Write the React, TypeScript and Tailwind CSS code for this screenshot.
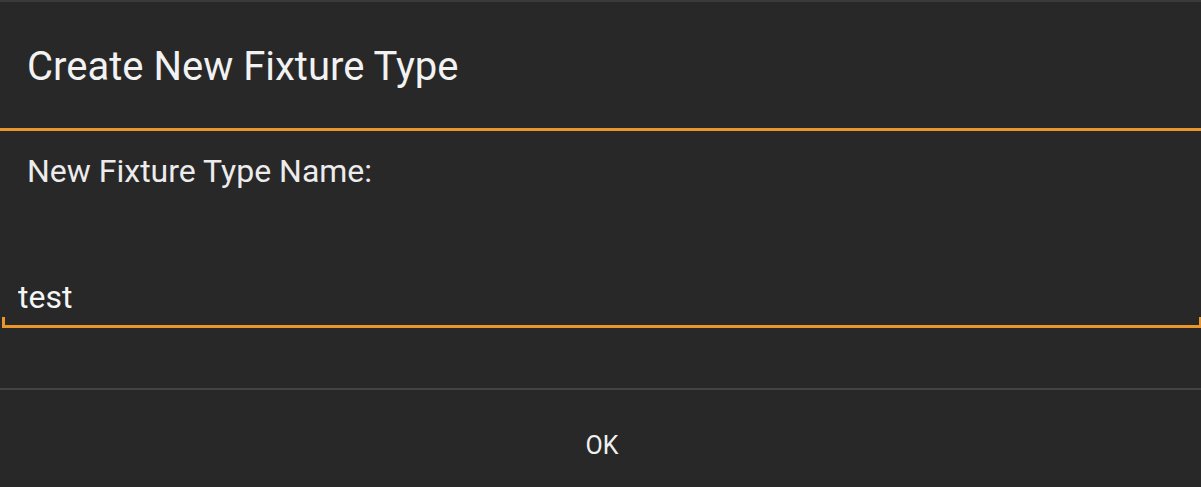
import React, { useState } from 'react';

export default function App() {
  const [name, setName] = useState('test');

  return (
    <div className="w-[1201px] h-[487px] bg-[#282828] flex flex-col overflow-hidden font-['Roboto',sans-serif] text-[#f2f2f2]">
      <div className="h-[2px] bg-[#3a3a3a]" />
      <div className="h-[126px] flex items-center pl-[27px] pt-[3px] text-[40px] leading-none">
        Create New Fixture Type
      </div>
      <div className="h-[3px] bg-[#ea962b]" />

      <div className="flex-1 flex flex-col">
        <div className="mt-[24px] pl-[27px] text-[32px] leading-none text-[#ececec]">
          New Fixture Type Name:
        </div>
        <div className="relative mt-[94px] ml-[2px] border-b-[3px] border-[#ea962b] pb-[10px] pl-[16px]">
          <input
            value={name}
            onChange={(e) => setName(e.target.value)}
            className="w-full bg-transparent outline-none text-[32px] leading-none h-[32px] text-[#f5f5f5]"
          />
          <span className="absolute left-0 bottom-0 w-[3px] h-[8px] bg-[#ea962b]" />
          <span className="absolute right-0 bottom-0 w-[2px] h-[8px] bg-[#ea962b]" />
        </div>
      </div>

      <div className="h-[2px] bg-[#444444]" />
      <button className="h-[97px] flex items-start justify-center pt-[43px] pl-[3px] text-[25px] leading-none text-[#f0f0f0]">
        OK
      </button>
    </div>
  );
}
